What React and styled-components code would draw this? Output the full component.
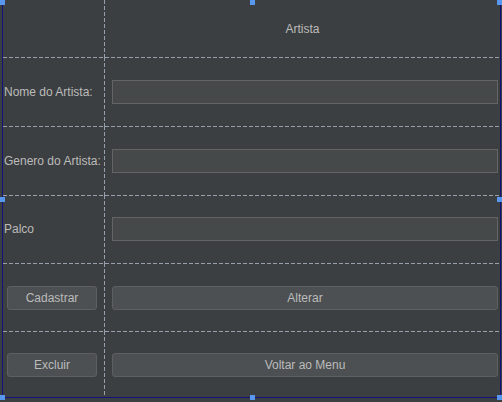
import React from 'react';
import styled, {createGlobalStyle} from 'styled-components';

const GlobalStyle = createGlobalStyle`
  html, body {
    margin: 0;
    padding: 0;
    background: #3c3f41;
  }
  * {
    box-sizing: border-box;
  }
`

const dash = '#98a0ac'

const Frame = styled.div`
  width: 502px;
  height: 402px;
  background: #3c3f41;
  position: relative;
  overflow: hidden;
  font-family: "Liberation Sans", Arial, sans-serif;
  font-size: 12px;
  color: #bbbbbb;
`

const Form = styled.div`
  margin-left: 2px;
  width: 499px;
  height: 398px;
  border-left: 1px solid #12127a;
  border-right: 1px solid #12127a;
  border-bottom: 1px solid #12127a;
  display: flex;
  flex-direction: column;
`

const Row = styled.div`
  display: grid;
  grid-template-columns: 102px 1fr;
  height: ${p => p.$h}px;
  background-image: ${p => p.$first ? 'none' : `repeating-linear-gradient(to right, ${dash} 0 4px, transparent 4px 6px)`};
  background-size: 100% 1px;
  background-repeat: no-repeat;
  background-position: left top;
`

const LabelCell = styled.div`
  display: flex;
  align-items: center;
  padding-left: ${p => p.$pad ?? 1}px;
  white-space: nowrap;
  background-image: repeating-linear-gradient(to bottom, ${dash} 0 4px, transparent 4px 6px);
  background-size: 1px 100%;
  background-repeat: no-repeat;
  background-position: right top;
`

const FieldCell = styled.div`
  display: flex;
  align-items: center;
  justify-content: ${p => p.$center ? 'center' : 'stretch'};
  padding: 0 2px 0 7px;
`

const Title = styled.span`
  color: #bbbbbb;
  margin-left: -5px;
`

const TextField = styled.div`
  width: 100%;
  height: 24px;
  background: #45494a;
  border: 1px solid #646464;
`

const Button = styled.button`
  width: ${p => p.$w ? `${p.$w}px` : '100%'};
  height: 24px;
  background: #4c5052;
  border: 1px solid #5e6060;
  border-radius: 3px;
  color: #bbbbbb;
  font-family: inherit;
  font-size: 12px;
  padding: 0;
  margin-top: ${p => p.$mt ?? 0}px;
`

const Handle = styled.div`
  position: absolute;
  width: 5px;
  height: 5px;
  background: #5797ee;
  left: ${p => p.$x}px;
  top: ${p => p.$y}px;
`

const handles = [
    [0, 0], [250, 0], [497, 0],
    [0, 197], [497, 197],
    [0, 395], [250, 395], [497, 395],
]

const App = () => {
    return (
        <>
            <GlobalStyle/>
            <Frame>
                <Form>
                    <Row $first $h={57}>
                        <LabelCell/>
                        <FieldCell $center>
                            <Title>Artista</Title>
                        </FieldCell>
                    </Row>
                    <Row $h={69}>
                        <LabelCell>Nome do Artista:</LabelCell>
                        <FieldCell><TextField/></FieldCell>
                    </Row>
                    <Row $h={69}>
                        <LabelCell>Genero do Artista:</LabelCell>
                        <FieldCell><TextField/></FieldCell>
                    </Row>
                    <Row $h={68}>
                        <LabelCell>Palco</LabelCell>
                        <FieldCell><TextField/></FieldCell>
                    </Row>
                    <Row $h={68}>
                        <LabelCell $pad={4}><Button $w={90} $mt={1}>Cadastrar</Button></LabelCell>
                        <FieldCell><Button $mt={1}>Alterar</Button></FieldCell>
                    </Row>
                    <Row $h={66}>
                        <LabelCell $pad={4}><Button $w={90} $mt={2}>Excluir</Button></LabelCell>
                        <FieldCell><Button $mt={2}>Voltar ao Menu</Button></FieldCell>
                    </Row>
                </Form>
                {handles.map(([x, y]) => (
                    <Handle key={`${x}-${y}`} $x={x} $y={y}/>
                ))}
            </Frame>
        </>
    )
}

export default App
